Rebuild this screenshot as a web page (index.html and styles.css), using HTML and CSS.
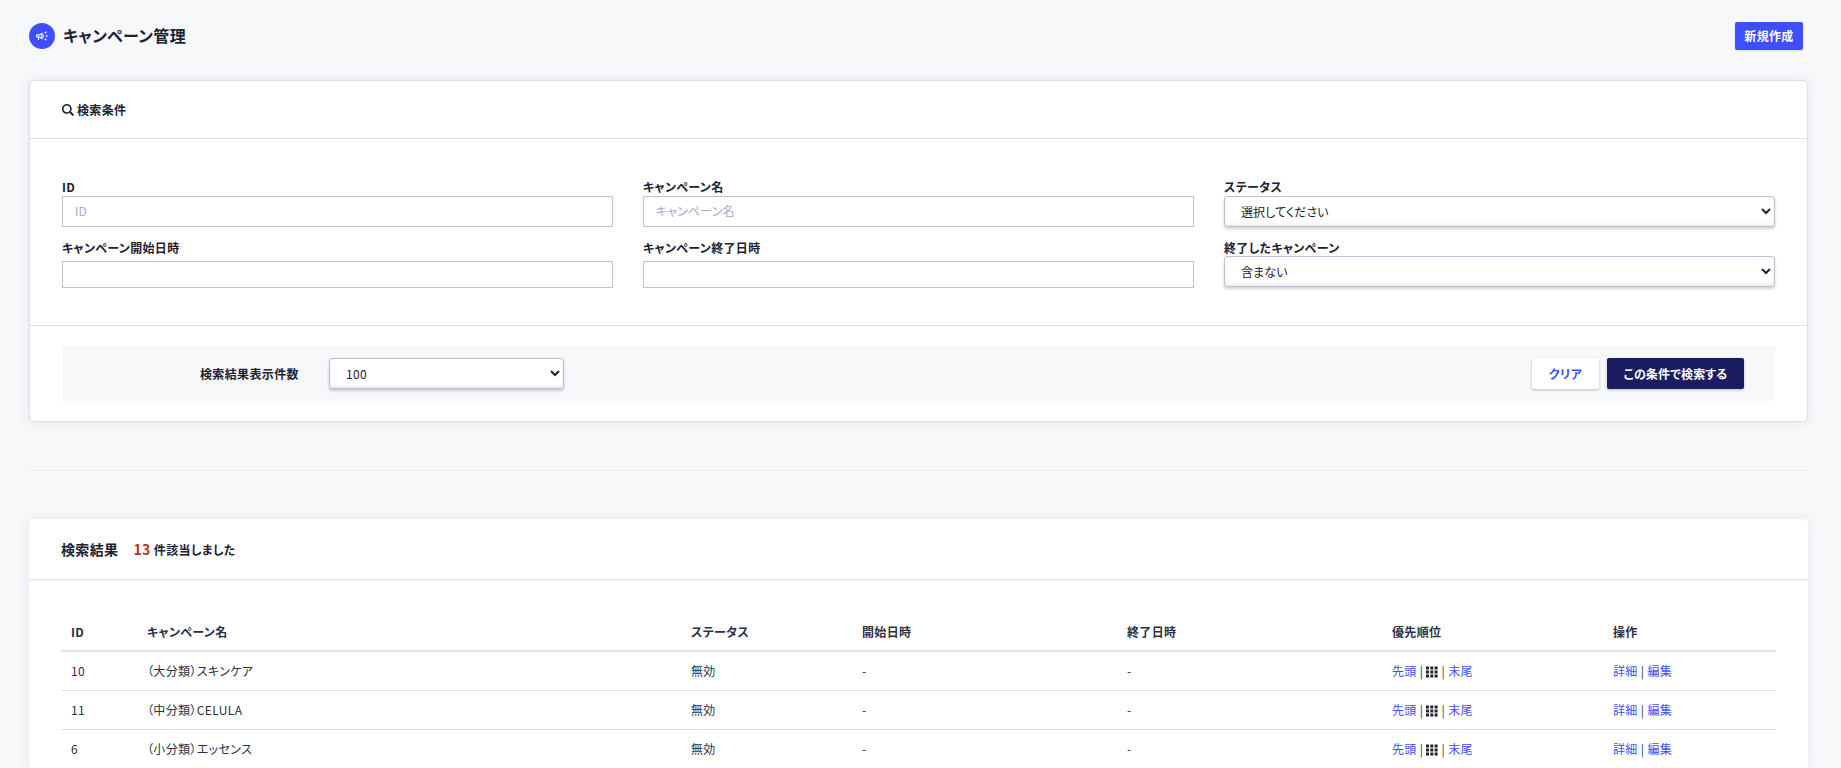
FILE: index.html
```html
<!DOCTYPE html>
<html lang="ja">
<head>
<meta charset="utf-8">
<title>キャンペーン管理</title>
<link rel="stylesheet" href="styles.css">
</head>
<body>
<svg width="0" height="0" class="sprite">
  <symbol id="grid" viewBox="0 0 12 12">
    <path d="M0 .5h3v3H0zM4.3.5h3v3h-3zM8.6.5h3v3h-3zM0 4.5h3v3H0zM4.3 4.5h3v3h-3zM8.6 4.5h3v3h-3zM0 8.5h3v3H0zM4.3 8.5h3v3h-3zM8.6 8.5h3v3h-3z"/>
  </symbol>
</svg>
<header class="page-header">
  <span class="page-icon">
    <svg width="14" height="14" viewBox="0 0 24 24" fill="#fff"><path d="M18 11v2h4v-2h-4zm-2 6.61c.96.71 2.21 1.65 3.2 2.39.4-.53.8-1.07 1.2-1.6-.99-.74-2.24-1.68-3.2-2.4-.4.54-.8 1.08-1.2 1.61zM20.4 5.6c-.4-.53-.8-1.07-1.2-1.6-.99.74-2.24 1.68-3.2 2.4.4.53.8 1.07 1.2 1.6.96-.72 2.21-1.65 3.2-2.4zM4 9c-1.1 0-2 .9-2 2v2c0 1.1.9 2 2 2h1v4h2v-4h1l5 3V6L8 9H4zm5.03 1.71L11 9.53v4.94l-1.97-1.18-.48-.29H4v-2h4.55l.48-.29zM15.5 12c0-1.33-.58-2.53-1.5-3.35v6.69c.92-.81 1.5-2.01 1.5-3.34z"/></svg>
  </span>
  <h1 class="page-title">キャンペーン管理</h1>
  <button class="btn-new">新規作成</button>
</header>

<section class="card search-card">
  <div class="card-head search-head">
    <svg class="search-icon" width="12" height="12" viewBox="0 0 512 512"><path d="M505 442.700L405.300 343c-4.500-4.500-10.600-7-17-7H372c27.600-35.300 44-79.700 44-128C416 93.100 322.900 0 208 0S0 93.100 0 208s93.100 208 208 208c48.300 0 92.700-16.400 128-44v16.300c0 6.400 2.500 12.500 7 17l99.700 99.700c9.400 9.400 24.600 9.400 33.900 0l28.300-28.300c9.400-9.400 9.400-24.600.100-34zM208 350c-78 0-142-64-142-142 0-78 64-142 142-142 78 0 142 64 142 142 0 78-64 142-142 142z"/></svg>
    <h2 class="search-title">検索条件</h2>
  </div>
  <form class="search-form">
    <div class="fields">
      <label class="field"><span class="label first">ID</span><input class="input" placeholder="ID"></label>
      <label class="field"><span class="label first">キャンペーン名</span><input class="input" placeholder="キャンペーン名"></label>
      <label class="field"><span class="label first">ステータス</span><select class="select"><option>選択してください</option></select></label>
      <label class="field"><span class="label">キャンペーン開始日時</span><input class="input date"></label>
      <label class="field"><span class="label">キャンペーン終了日時</span><input class="input date"></label>
      <label class="field"><span class="label">終了したキャンペーン</span><select class="select"><option>含まない</option></select></label>
    </div>
    <div class="form-foot">
      <div class="foot-bar">
        <span class="foot-label">検索結果表示件数</span>
        <select class="select count"><option>100</option></select>
        <button type="button" class="btn btn-clear">クリア</button>
        <button type="button" class="btn btn-search">この条件で検索する</button>
      </div>
    </div>
  </form>
</section>

<hr class="divider">

<section class="card result-card">
  <div class="card-head result-head">
    <h2 class="result-title">検索結果</h2>
    <p class="result-count"><span class="num">13</span> 件該当しました</p>
  </div>
  <table class="table">
    <colgroup><col class="c-id"><col class="c-name"><col class="c-status"><col class="c-start"><col class="c-end"><col class="c-order"><col class="c-ops"></colgroup>
    <thead>
      <tr><th>ID</th><th>キャンペーン名</th><th>ステータス</th><th>開始日時</th><th>終了日時</th><th>優先順位</th><th>操作</th></tr>
    </thead>
    <tbody>
      <tr><td>10</td><td>（大分類）スキンケア</td><td>無効</td><td>-</td><td>-</td><td><a>先頭</a> | <svg class="grip"><use href="#grid"/></svg> | <a>末尾</a></td><td><a>詳細</a> | <a>編集</a></td></tr>
      <tr><td>11</td><td>（中分類）CELULA</td><td>無効</td><td>-</td><td>-</td><td><a>先頭</a> | <svg class="grip"><use href="#grid"/></svg> | <a>末尾</a></td><td><a>詳細</a> | <a>編集</a></td></tr>
      <tr><td>6</td><td>（小分類）エッセンス</td><td>無効</td><td>-</td><td>-</td><td><a>先頭</a> | <svg class="grip"><use href="#grid"/></svg> | <a>末尾</a></td><td><a>詳細</a> | <a>編集</a></td></tr>
    </tbody>
  </table>
</section>
</body>
</html>
```
FILE: styles.css
```css
* { box-sizing: border-box; }
html { overflow: hidden; }
body {
  margin: 0;
  height: 768px;
  overflow: hidden;
  padding: 0 33px 0 29px;
  background: #f7f8fa;
  color: #2c2f45;
  font: 12px/18px "Noto Sans CJK JP", "Noto Sans", sans-serif;
  font-feature-settings: "palt";
  letter-spacing: .36px;
}
h1, h2, p { margin: 0; }
input, select, button {
  font: inherit;
  font-feature-settings: inherit;
  letter-spacing: .1px;
  color: inherit;
}
.sprite { position: absolute; }

.page-header {
  display: flex;
  align-items: center;
  height: 80px;
  padding: 0 5px 8px 0;
}
.page-icon {
  display: flex;
  align-items: center;
  justify-content: center;
  width: 26px;
  height: 26px;
  border-radius: 50%;
  background: #3f4eff;
}
.page-title { margin-left: 8px; padding-bottom: 2px; font-size: 16px; line-height: 24px; font-weight: 700; letter-spacing: .4px; color: #20222e; }
.btn-new {
  margin-left: auto;
  width: 68px;
  height: 28px;
  padding: 0;
  border: 0;
  border-radius: 2px;
  background: #3f4eff;
  color: #fff;
  font-weight: 700;
  letter-spacing: .36px;
  box-shadow: 0 1px 2px rgba(0, 0, 0, .1);
}

.card { background: #fff; border-radius: 5px; box-shadow: 0 0 12px rgba(60, 110, 150, .12); }
.card-head { display: flex; align-items: center; border-bottom: 1px solid #dedfe6; }
.search-card { height: 342px; border: 1px solid #dcdee8; color: #20222e; }
.search-head { height: 58px; padding: 0 32px; gap: 3px; }
.search-icon { fill: #20222e; }
.search-title { font-size: 12px; font-weight: 700; }

.fields {
  display: grid;
  grid-template-columns: repeat(3, 551px);
  grid-template-rows: 49px 50px;
  gap: 11px 30px;
  height: 186px;
  padding: 39px 32px 0;
}
.field { display: flex; flex-direction: column; }
.label { height: 18px; line-height: 20px; font-weight: 700; }
.label.first { line-height: 18px; }
.input {
  width: 100%;
  height: 31px;
  padding: 0 12px 2px;
  border: 1px solid #bdc0d8;
  background: #fff;
}
.input::placeholder { color: #a6a8c4; opacity: 1; }
.input.date { height: 27px; margin-top: 5px; }
.select {
  width: 100%;
  height: 31px;
  flex-shrink: 0;
  padding: 0 0 0 12px;
  border: 1px solid #bdc0d8;
  border-radius: 3px;
  background: #fff;
  box-shadow: 0 2px 3px rgba(0, 0, 0, .18), inset 0 -2px 3px rgba(0, 0, 0, .08);
}
.form-foot { border-top: 1px solid #dedfe2; padding: 20px 32px 0; }
.foot-bar { display: flex; align-items: center; height: 55px; padding: 0 31px 0 138px; background: #f7f8fa; }
.foot-label { width: 129px; padding-top: 1px; font-weight: 700; }
.count { width: 235px; letter-spacing: .36px; }
.btn {
  height: 31px;
  padding: 1px 0 0;
  border: 0;
  border-radius: 2px;
  font-weight: 700;
  box-shadow: 0 1px 3px rgba(0, 0, 0, .25);
}
.btn-clear { width: 67px; margin-left: auto; background: #fff; color: #3f4eff; letter-spacing: .36px; }
.btn-search { width: 137px; margin-left: 8px; background: #1b1d60; color: #fff; }

.divider { height: 1px; margin: 48px 0; border: 0; background: #e9eaed; }

.result-head { height: 61px; padding: 0 32px; border-color: #dedfe2; }
.result-title { font-size: 14px; font-weight: 700; color: #20222e; }
.result-count { margin-left: 15px; font-weight: 700; color: #20222e; }
.num { font-size: 14px; color: #c0301c; }
.table {
  width: 1715px;
  margin: 33px 32px 0;
  table-layout: fixed;
  border-collapse: separate;
  border-spacing: 0;
  text-align: left;
}
.c-id { width: 76px; }
.c-name { width: 544px; }
.c-status { width: 171px; }
.c-start { width: 265px; }
.c-end { width: 265px; }
.c-order { width: 221px; }
.table th { height: 39px; padding: 0 10px; border-bottom: 2px solid #dfe0e8; font-weight: 700; }
.table td { height: 39px; padding: 0 10px; border-bottom: 1px solid #dfe0e6; white-space: nowrap; }
.table a { color: #3f4eff; }
.grip { width: 12px; height: 12px; vertical-align: -2px; fill: #20222e; }
```
